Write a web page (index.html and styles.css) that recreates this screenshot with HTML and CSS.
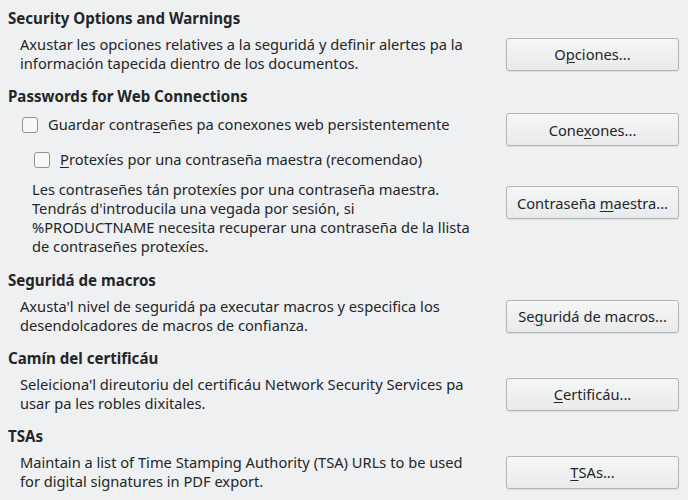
FILE: index.html
```html
<!DOCTYPE html>
<html>
<head>
<meta charset="utf-8">
<link rel="stylesheet" href="styles.css">
</head>
<body>
<div class="page">
  <div class="heading first">Security Options and Warnings</div>
  <div class="row center">
    <div class="desc">Axustar les opciones relatives a la seguridá y definir alertes pa la<br>información tapecida dientro de los documentos.</div>
    <button class="btn">O<u>p</u>ciones...</button>
  </div>

  <div class="heading">Passwords for Web Connections</div>
  <div class="pw">
    <div class="pw-left">
      <label class="check lvl1"><span class="box"></span><span>Guardar contra<u>s</u>eñes pa conexones web persistentemente</span></label>
    </div>
    <button class="btn">Cone<u>x</u>ones...</button>
  </div>
  <label class="check lvl2"><span class="box"></span><span><u>P</u>rotexíes por una contraseña maestra (recomendao)</span></label>
  <div class="pw pw-info">
    <div class="desc deep">Les contraseñes tán protexíes por una contraseña maestra.<br>Tendrás d'introducila una vegada por sesión, si<br>%PRODUCTNAME necesita recuperar una contraseña de la llista<br>de contraseñes protexíes.</div>
    <button class="btn btn-master">Contraseña <u>m</u>aestra...</button>
  </div>

  <div class="heading">Seguridá de macros</div>
  <div class="row center">
    <div class="desc">Axusta'l nivel de seguridá pa executar macros y especifica los<br>desendolcadores de macros de confianza.</div>
    <button class="btn">Se<u>g</u>uridá de macros...</button>
  </div>

  <div class="heading">Camín del certificáu</div>
  <div class="row center">
    <div class="desc">Seleiciona'l direutoriu del certificáu Network Security Services pa<br>usar pa les robles dixitales.</div>
    <button class="btn"><u>C</u>ertificáu...</button>
  </div>

  <div class="heading">TSAs</div>
  <div class="row center">
    <div class="desc">Maintain a list of Time Stamping Authority (TSA) URLs to be used<br>for digital signatures in PDF export.</div>
    <button class="btn"><u>T</u>SAs...</button>
  </div>
</div>
</body>
</html>
```

FILE: styles.css
```css
html, body {
  margin: 0;
  padding: 0;
  background: #eff0f1;
}
body {
  width: 688px;
  height: 500px;
  overflow: hidden;
  font-family: "Noto Sans", "DejaVu Sans", sans-serif;
  font-size: 14.67px;
  line-height: 19px;
  color: #232627;
}
.page {
  padding: 0 9px 0 8px;
}
.heading {
  font-weight: bold;
  font-size: 15.1px;
  height: 19px;
  margin-top: 14px;
}
.heading.first {
  margin-top: 9px;
}
.row {
  display: flex;
  justify-content: space-between;
  margin-top: 7px;
}
.row.center {
  align-items: center;
}
.desc {
  padding-left: 12px;
  white-space: nowrap;
}
.desc.deep {
  padding-left: 24px;
}
.btn {
  flex: 0 0 auto;
  width: 173px;
  height: 33px;
  box-sizing: border-box;
  border: 1px solid #b3b4b5;
  border-radius: 3px;
  background: linear-gradient(#f5f6f6, #e9eaeb);
  box-shadow: 0 1px 1px rgba(0,0,0,0.08);
  font-family: inherit;
  font-size: 14.67px;
  color: #232627;
  padding: 0;
  margin: 0;
}
u {
  text-underline-offset: 2px;
  text-decoration-thickness: 1px;
}
.pw {
  display: flex;
  justify-content: space-between;
  align-items: flex-start;
  margin-top: 7px;
}
.pw-left {
  padding-top: 2px;
}
.check {
  display: flex;
  align-items: center;
  height: 19px;
  white-space: nowrap;
}
.check .box {
  width: 16px;
  height: 16px;
  box-sizing: border-box;
  border: 1px solid #909294;
  border-radius: 3px;
  background: #f7f8f8;
  margin-right: 10px;
}
.lvl1 {
  padding-left: 14px;
}
.lvl2 {
  padding-left: 26px;
  margin-top: 4px;
}
.pw-info {
  margin-top: 11px;
}
.btn-master {
  margin-top: 6px;
}
.pw-info + .heading {
  margin-top: 15px;
}
```
